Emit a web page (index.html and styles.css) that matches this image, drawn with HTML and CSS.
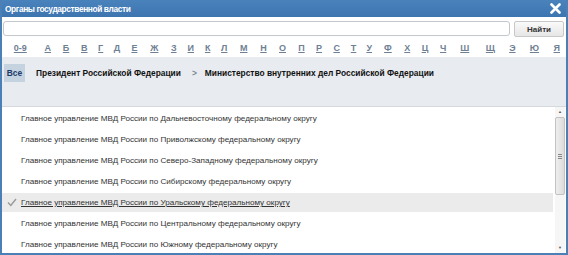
FILE: index.html
```html
<!DOCTYPE html>
<html lang="ru">
<head>
  <meta charset="UTF-8">
  <title>Органы государственной власти</title>
  <link rel="stylesheet" href="styles.css">
</head>
<body>
  <div class="window">
    <div class="titlebar">
      <span class="title">Органы государственной власти</span>
      <svg class="close" width="11" height="11" viewBox="0 0 11 11"><path d="M1.5 1.5 L9.5 9.5 M9.5 1.5 L1.5 9.5" stroke="#fff" stroke-width="2.6" stroke-linecap="round"/></svg>
    </div>
    <div class="search">
      <input type="text" class="search-input">
      <button class="search-btn">Найти</button>
    </div>
    <div class="alphabet">
      <a href="#">0-9</a><a href="#">А</a><a href="#">Б</a><a href="#">В</a><a href="#">Г</a><a href="#">Д</a><a href="#">Е</a><a href="#">Ж</a><a href="#">З</a><a href="#">И</a><a href="#">К</a><a href="#">Л</a><a href="#">М</a><a href="#">Н</a><a href="#">О</a><a href="#">П</a><a href="#">Р</a><a href="#">С</a><a href="#">Т</a><a href="#">У</a><a href="#">Ф</a><a href="#">Х</a><a href="#">Ц</a><a href="#">Ч</a><a href="#">Ш</a><a href="#">Щ</a><a href="#">Э</a><a href="#">Ю</a><a href="#">Я</a>
    </div>
    <div class="crumbs">
      <span class="crumb-all">Все</span>
      <span class="crumb">Президент Российской Федерации</span>
      <span class="crumb-sep">&gt;</span>
      <span class="crumb">Министерство внутренних дел Российской Федерации</span>
    </div>
    <div class="list-box">
      <ul class="list">
        <li>Главное управление МВД России по Дальневосточному федеральному округу</li>
        <li>Главное управление МВД России по Приволжскому федеральному округу</li>
        <li>Главное управление МВД России по Северо-Западному федеральному округу</li>
        <li>Главное управление МВД России по Сибирскому федеральному округу</li>
        <li class="selected">
          <svg class="check" width="10" height="9" viewBox="0 0 10 9"><path d="M1 4.5 L3.8 7.5 L9 1" fill="none" stroke="#9a9a9a" stroke-width="1.4"/></svg>
          <span>Главное управление МВД России по Уральскому федеральному округу</span>
        </li>
        <li>Главное управление МВД России по Центральному федеральному округу</li>
        <li>Главное управление МВД России по Южному федеральному округу</li>
      </ul>
      <div class="scrollbar">
        <span class="arrow">&#9650;</span>
        <div class="track">
          <div class="thumb"><span class="grip"></span></div>
        </div>
        <span class="arrow">&#9660;</span>
      </div>
    </div>
  </div>
</body>
</html>
```

FILE: styles.css
```css
body {
  margin: 0;
  font-family: "Liberation Sans", Arial, sans-serif;
  font-size: 8px;
  color: #333;
  background: #fff;
}

.window {
  width: 568px;
  height: 255px;
  box-sizing: border-box;
  border: 2px solid #4b80b7;
  border-top: none;
  display: flex;
  flex-direction: column;
  overflow: hidden;
}

.titlebar {
  height: 17px;
  margin: 0 -2px;
  padding: 0 7px 0 5px;
  background: linear-gradient(#4a82bc, #3c75b0);
  display: flex;
  align-items: center;
  justify-content: space-between;
}

.title {
  color: #fff;
  font-weight: bold;
  font-size: 8.4px;
  letter-spacing: -0.4px;
}

.search {
  display: flex;
  gap: 4px;
  padding: 4px 2px 0 1px;
}

.search-input {
  flex: 1;
  height: 13px;
  margin: 0;
  padding: 0;
  border: 1px solid #c4c8cc;
  border-radius: 3px;
  outline: none;
}

.search-btn {
  width: 50px;
  height: 16px;
  margin: 0;
  padding: 0;
  border: 1px solid #c8c8c8;
  border-radius: 2px;
  background: linear-gradient(#fafafa, #e6e6e6);
  font-family: inherit;
  font-size: 8px;
  font-weight: bold;
  color: #333;
}

.alphabet {
  display: table;
  width: 100%;
  height: 19px;
  margin-top: 1px;
}

.alphabet a {
  display: table-cell;
  vertical-align: middle;
  text-align: center;
  color: #6f7f94;
  font-weight: bold;
  font-size: 9px;
}

.crumbs {
  height: 50px;
  background: #e8ebef;
  border-bottom: 1px solid #d5d9de;
  display: flex;
  align-items: flex-start;
  padding: 7px 0 0 2px;
  box-sizing: border-box;
  font-weight: bold;
  font-size: 8.4px;
  color: #111;
}

.crumb-all {
  width: 21px;
  height: 18px;
  line-height: 18px;
  text-align: center;
  background: #c5d2e0;
  color: #1d3a68;
  margin-right: 11px;
}

.crumb {
  line-height: 18px;
}

.crumb-sep {
  line-height: 18px;
  color: #7a8799;
  margin: 0 8px 0 11px;
}

.list-box {
  flex: 1;
  display: flex;
  min-height: 0;
}

.list {
  flex: 1;
  list-style: none;
  margin: 0;
  padding: 2px 0 0;
}

.list li {
  height: 19px;
  margin-bottom: 2px;
  display: flex;
  align-items: center;
  padding-left: 19px;
  position: relative;
  font-size: 8.1px;
}

.list li.selected {
  background: #ebebeb;
}

.list li.selected span {
  text-decoration: underline;
}

.check {
  position: absolute;
  left: 5px;
  top: 5px;
}

.scrollbar {
  width: 10px;
  margin: 0 1px 0 2px;
  display: flex;
  flex-direction: column;
  align-items: center;
  background: #f6f6f6;
}

.arrow {
  font-size: 4px;
  color: #555;
  height: 10px;
  line-height: 10px;
}

.track {
  flex: 1;
  width: 100%;
}

.thumb {
  height: 78px;
  box-sizing: border-box;
  border: 1px solid #c2c2c2;
  border-radius: 2px;
  background: linear-gradient(to right, #eeeeee, #dcdcdc);
  display: flex;
  align-items: center;
  justify-content: center;
}

.grip {
  width: 4px;
  height: 5px;
  background: repeating-linear-gradient(#888 0 1px, transparent 1px 2px);
}
```
